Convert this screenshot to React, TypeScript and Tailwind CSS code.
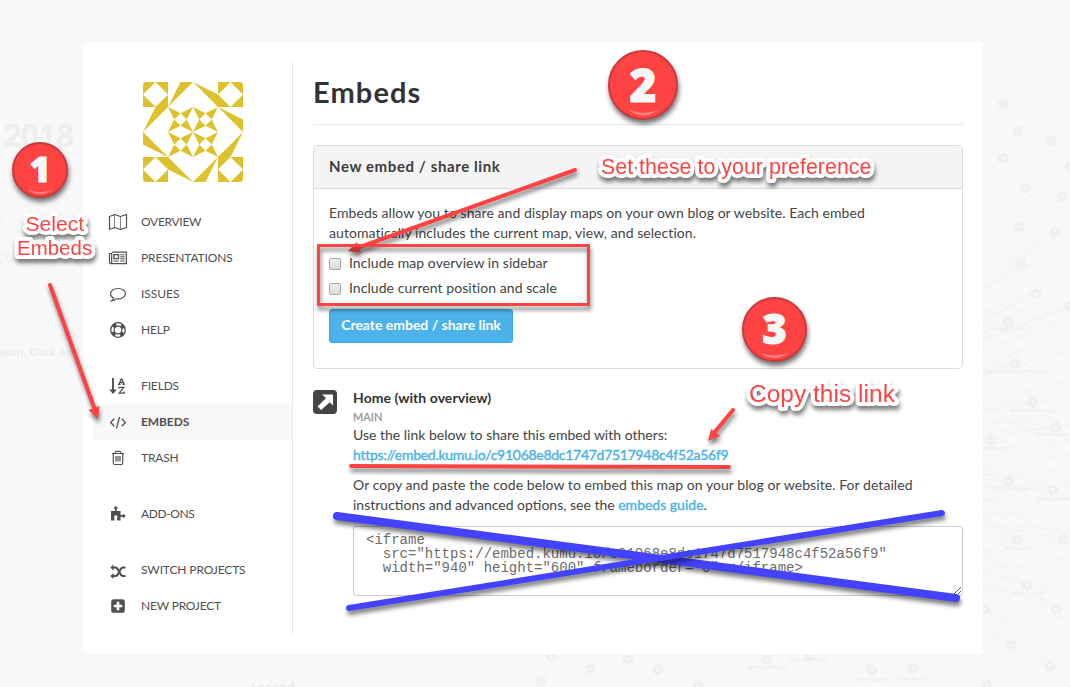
import type { ReactNode } from "react";

const navGroups = [
  [
    { label: "OVERVIEW", icon: "map", tracking: "tracking-[-0.3px]" },
    { label: "PRESENTATIONS", icon: "news", tracking: "tracking-[-0.15px]" },
    { label: "ISSUES", icon: "comment", tracking: "tracking-[-0.05px]" },
    { label: "HELP", icon: "help", tracking: "tracking-[-0.2px]" },
  ],
  [
    { label: "FIELDS", icon: "sort", tracking: "tracking-[-0.15px]" },
    { label: "EMBEDS", icon: "code", tracking: "tracking-[-0.1px]", active: true },
    { label: "TRASH", icon: "trash", tracking: "tracking-[-0.2px]" },
  ],
  [{ label: "ADD-ONS", icon: "puzzle", tracking: "tracking-[-0.4px]" }],
  [
    { label: "SWITCH PROJECTS", icon: "switch", tracking: "tracking-[-0.13px]" },
    { label: "NEW PROJECT", icon: "plus", tracking: "tracking-[-0.2px]" },
  ],
];

const icons: Record<string, ReactNode> = {
  map: (
    <g fill="none" stroke="currentColor" strokeLinejoin="round">
      <path d="M1.5 4.5 6.5 2.5 12.5 4.5 18.5 2.5V15.5L12.5 17.5 6.5 15.5 1.5 17.5Z" strokeWidth="1.2" />
      <path d="M6.5 2.5V15.5M12.5 4.5V17.5" strokeWidth="0.7" />
    </g>
  ),
  news: (
    <g fill="none" stroke="currentColor">
      <path d="M4 4.2H18.3V15.6H2.6Q1.5 15.6 1.5 14.2V5.5H3.7V14.2Q3.7 15.6 2.6 15.6" strokeWidth="1.2" />
      <path d="M6 6.6H10.5V10.6H6Z" strokeWidth="1.4" />
      <path d="M12.2 6.8H16.7M12.2 8.8H16.7M12.2 10.8H16.7M5.4 13H10.8M12.2 13H16.7" />
    </g>
  ),
  comment: (
    <path
      d="M10 4.5C5.6 4.5 2.5 6.8 2.5 9.7C2.5 11.6 3.8 13.1 5.7 14.1C5.4 15.3 4.6 16.2 3.5 17C5.6 16.8 7.2 16 8.4 14.9C13.6 15.4 17.5 13 17.5 9.7C17.5 6.8 14.4 4.5 10 4.5Z"
      fill="none"
      stroke="currentColor"
      strokeWidth="1.2"
    />
  ),
  help: (
    <g fill="none" stroke="currentColor">
      <circle cx="10" cy="10" r="5.7" strokeWidth="4" strokeDasharray="4 4.954" strokeDashoffset="-2.48" />
      <circle cx="10" cy="10" r="7.3" strokeWidth="1.3" />
      <circle cx="10" cy="10" r="3.9" strokeWidth="1.2" />
    </g>
  ),
  sort: (
    <>
      <path d="M5 2V15M3.2 14.5 5 16.6 6.8 14.5Z" fill="currentColor" stroke="currentColor" strokeWidth="1.9" />
      <g fill="none" stroke="currentColor" strokeWidth="1.3">
        <path d="M11 8.2 13.3 2.8H13.8L16 8.2M11.7 6.5H15.4M10 8.4H12.6M14.5 8.4H17" />
        <path d="M11 12.6V11.4H15.8L11.2 17.2H16.1V15.6" />
      </g>
    </>
  ),
  code: (
    <path d="M6.2 6.8 2.7 10.5 6.2 14.2M13.8 6.8 17.3 10.5 13.8 14.2M11.6 4.8 8.4 16.3" fill="none" stroke="currentColor" strokeWidth="1.3" />
  ),
  trash: (
    <g fill="none" stroke="currentColor" strokeWidth="1.2">
      <path d="M4 5.5H16M7 5.2Q7.2 3.4 8.4 3.4H11.6Q12.8 3.4 13 5.2M5.3 5.5V15Q5.3 16.5 6.7 16.5H13.3Q14.7 16.5 14.7 15V5.5" />
      <path d="M8 8V13.5M10 8V13.5M12 8V13.5" />
    </g>
  ),
  puzzle: (
    <path
      d="M3 7H6.9V5.2A1.6 1.6 0 1 1 8.7 5.2V7H12.6V11H14.4A1.6 1.6 0 1 1 14.4 12.8H12.6V16.5H9.2V13.7A1.6 1.6 0 1 0 6.4 13.7V16.5H3Z"
      fill="currentColor"
    />
  ),
  switch: (
    <g fill="none" stroke="currentColor" strokeWidth="2">
      <path d="M17.5 7.5H15C11 7.5 11.5 16 7.5 16H4.5" />
      <path d="M17.5 16H15C11 16 11.5 7.5 7.5 7.5H4.5" />
      <path d="M5.5 4.5 2.3 7.5 5.5 10.5ZM5.5 13 2.3 16 5.5 19Z" fill="currentColor" stroke="none" />
    </g>
  ),
  plus: (
    <>
      <rect x="3.2" y="3.2" width="13.6" height="13.6" rx="2.6" fill="currentColor" />
      <path d="M10 5.8V14.2M5.8 10H14.2" stroke="#fff" strokeWidth="2.6" />
    </>
  ),
};

function Identicon() {
  const corners = ["0 0", "75 0", "0 75", "75 75"];
  const centers = ["25 25", "50 25", "25 50", "50 50"];
  return (
    <svg className="ml-[50px] h-[100px] w-[100px] rounded-[3px]" viewBox="0 0 100 100" fill="#ddc22e">
      {corners.map((c) => (
        <path key={c} d="M0 0H25V25H0ZM12.5 0 0 12.5 12.5 25 25 12.5Z" fillRule="evenodd" transform={`translate(${c})`} />
      ))}
      {centers.map((c) => (
        <path
          key={c}
          d="M0 0 12.5 6.25 6.25 12.5ZM25 0 12.5 6.25 18.75 12.5ZM25 25 18.75 12.5 12.5 18.75ZM0 25 6.25 12.5 12.5 18.75Z"
          transform={`translate(${c})`}
        />
      ))}
      <path d="M25 25 37.5 0H50ZM50 0 75 12.5V25ZM75 25 100 37.5V50ZM100 50 87.5 75H75ZM75 75 62.5 100H50ZM50 100 25 87.5V75ZM25 75 0 62.5V50ZM0 50 12.5 25H25Z" />
    </svg>
  );
}

const nodes = [
  [1003, 104], [1018, 131], [1051, 141], [541, 681], [1003, 158], [1070, 167], [1025, 188], [1063, 197], [1019, 227],
  [1055, 232], [1021, 264], [1036, 294], [1070, 306], [1008, 322], [1015, 363], [1033, 402], [1056, 427], [992, 440],
  [1009, 481], [1053, 490], [1017, 540], [1064, 539], [1027, 585], [985, 609], [1056, 609], [1011, 645], [1050, 666],
  [987, 685], [551, 656], [590, 669], [628, 659], [658, 670], [698, 686], [767, 659], [809, 655], [872, 670], [913, 669],
];

const names = [
  { x: 1008, y: 331, name: "Timothy Jenkins" },
  { x: 1015, y: 373, name: "Christine Mitchel Robinson" },
  { x: 1033, y: 412, name: "Rebecca Gustafson" },
  { x: 1059, y: 436, name: "Kate Margaret Robin" },
  { x: 991, y: 450, name: "Liv Anderson" },
  { x: 1010, y: 491, name: "Derek Peterson" },
  { x: 1053, y: 500, name: "Robin Larsson" },
  { x: 1017, y: 550, name: "Ida Pierson" },
  { x: 1028, y: 595, name: "Milan Tedorak" },
  { x: 767, y: 669, name: "Veronica Petrson" },
  { x: 809, y: 661, name: "Nicole Blanchon" },
  { x: 872, y: 681, name: "Laura Robinson" },
  { x: 913, y: 680, name: "Rosa Medellin" },
];

function MapBackdrop() {
  return (
    <svg className="absolute inset-0 h-full w-full" viewBox="0 0 1070 687" fontFamily="Open Sans, sans-serif">
      <g stroke="#f5f2ee" strokeWidth="0.9">
        {nodes.map(([x, y], i) => (
          <path key={i} d={`M${x} ${y}L780 ${340 + i * 7}`} />
        ))}
        {nodes.slice(9).map(([x, y], i) => (
          <path key={i} d={`M${x} ${y}L${840 - i * 4} 400M1070 ${230 + i * 15}L900 ${320 + i * 10}M1070 ${330 + i * 14}L940 ${280 + i * 11}`} />
        ))}
      </g>
      {nodes.map(([x, y], i) => (
        <g key={i}>
          <ellipse cx={x} cy={y} rx="5.5" ry="5.5" fill="#f1f1f5" />
          {i > 3 && <circle cx={x} cy={y} r="2.6" fill="#f7f7f2" stroke="#e9e9ea" strokeWidth="0.8" />}
        </g>
      ))}
      <g fill="#ebebea" fontSize="5" textAnchor="middle">
        {names.map((n) => (
          <text key={n.name} x={n.x} y={n.y}>{n.name}</text>
        ))}
      </g>
      <text x="3" y="147" fontSize="32" fontWeight="700" fill="#eeeeee" textLength="71">2018</text>
      <text x="-4" y="226" fontSize="13" fill="#eeeeee">y</text>
      <text x="-2" y="262" fontSize="12" fill="#eeeeee">COMMUNITY</text>
      <text x="-3" y="356" fontSize="11" fontWeight="700" fill="#ececec">eson. Click and</text>
      <text x="251" y="692" fontSize="12" fontWeight="700" fill="#e9e9e9">Legend</text>
    </svg>
  );
}

const badges = [
  { n: "1", className: "left-[12px] top-[142px] h-[56px] w-[56px] pb-[3px] text-[36px]" },
  { n: "2", className: "left-[608px] top-[50px] h-[70px] w-[70px] pb-[3px] text-[46px]" },
  { n: "3", className: "left-[742px] top-[297px] h-[65px] w-[65px] pb-[3px] text-[42px]" },
];

function Annotations() {
  return (
    <>
      <svg className="pointer-events-none absolute inset-0 h-full w-full" viewBox="0 0 1070 687">
        <defs>
          <filter id="shadow" filterUnits="userSpaceOnUse" x="0" y="0" width="1070" height="687" colorInterpolationFilters="sRGB">
            <feDropShadow dx="1" dy="4" stdDeviation="2" floodColor="#000" floodOpacity="0.5" />
          </filter>
        </defs>
        <g filter="url(#shadow)" stroke="#ff4343" fill="#ff4343" strokeLinecap="round">
          <path d="M50 285 95 410" strokeWidth="4" />
          <path d="M98 419 88.5 410 99.5 406Z" stroke="none" />
        </g>
        <g filter="url(#shadow)" stroke="#ff4343" fill="#ff4343" strokeLinecap="round">
          <path d="M575 170 360 247" strokeWidth="4" />
          <path d="M348 251 357 242 361 253Z" stroke="none" />
        </g>
        <g filter="url(#shadow)" stroke="#ff4343" fill="#ff4343" strokeLinecap="round">
          <path d="M733 410 714 433" strokeWidth="4" />
          <path d="M708 441 711 429 720 436Z" stroke="none" />
        </g>
        <path filter="url(#shadow)" d="M351 466 729 467" stroke="#ff4343" strokeWidth="4" strokeLinecap="round" />
        <rect filter="url(#shadow)" x="318.5" y="245.5" width="270" height="59" fill="none" stroke="#ff4343" strokeWidth="3" />
        <path filter="url(#shadow)" d="M337 516 956 598" stroke="#4343ff" strokeWidth="8" strokeLinecap="round" />
        <path filter="url(#shadow)" d="M349 608 942 513" stroke="#4343ff" strokeWidth="6" strokeLinecap="round" />
        <g
          filter="url(#shadow)"
          fill="#ff4343"
          stroke="#fff"
          strokeWidth="8"
          strokeLinejoin="round"
          paintOrder="stroke"
          fontFamily="Liberation Sans, Arial, sans-serif"
        >
          <text x="25.5" y="231" fontSize="21">Select</text>
          <text x="17" y="255" fontSize="20.4">Embeds</text>
          <text x="601" y="174" fontSize="21.3">Set these to your preference</text>
          <text x="749" y="402" fontSize="24.4">Copy this link</text>
        </g>
      </svg>
      {badges.map((b) => (
        <div
          key={b.n}
          className={`absolute flex items-center justify-center rounded-full border-2 border-[#c93a40] bg-[#ff4343] font-['Noto_Sans'] leading-none font-black text-[#f8f8f8] shadow-[1px_4px_5px_rgba(0,0,0,0.55)] [-webkit-text-stroke:1px_#f8f8f8] ${b.className}`}
        >
          {b.n}
          <svg className="absolute bottom-[3%] left-1/4 w-1/2" viewBox="0 0 40 8">
            <path d="M1 1Q20 8 39 1Q20 15 1 1Z" fill="#ff8080" />
          </svg>
        </div>
      ))}
    </>
  );
}

function Sidebar() {
  return (
    <aside className="mt-5 ml-[10px] flex h-[572px] w-[200px] flex-col border-r border-[#e8e8e8] pt-5">
      <Identicon />
      <nav className="mt-[22px] flex flex-col gap-5">
        {navGroups.map((group, i) => (
          <ul key={i}>
            {group.map((item) => (
              <li
                key={item.label}
                className={`flex h-9 items-center pl-[15px] text-[12px] text-[#505050] ${item.tracking} ${
                  "active" in item ? "bg-[#f8f8f8] font-bold" : ""
                }`}
              >
                <svg className="mr-[13px] h-5 w-5" viewBox="0 0 20 20">
                  {icons[item.icon]}
                </svg>
                {item.label}
              </li>
            ))}
          </ul>
        ))}
      </nav>
    </aside>
  );
}

function Option({ children }: { children: ReactNode }) {
  return (
    <label className="flex h-[25px] items-center">
      <input
        type="checkbox"
        className="mt-px mr-2 h-3 w-3 appearance-none rounded-[2px] border border-[#a8a8a8] bg-linear-to-b from-[#eeeeee] to-[#dcdcdc]"
      />
      <span className="pb-px">{children}</span>
    </label>
  );
}

export default function App() {
  return (
    <div className="relative h-[687px] w-[1070px] overflow-hidden bg-[#f8f8f8] pt-[42px] pl-[83px] font-['Lato',sans-serif] text-[14px] leading-5 tracking-[0.06px] text-[#444]">
      <MapBackdrop />
      <div className="relative flex h-[612px] w-[900px] rounded-[3px] bg-white">
        <Sidebar />
        <main className="ml-5 w-[650px]">
          <h1 className="mt-5 flex h-[63px] items-center border-b border-[#e8e8e8] pb-[3px] text-[29px] font-bold tracking-[1.1px] text-[#333]">
            Embeds
          </h1>

          <section className="mt-5 h-[224px] rounded-[4px] border border-[#dcdcdc]">
            <h2 className="flex h-[43px] items-center border-b border-[#dcdcdc] bg-[#f4f4f4] px-[15px] pb-[2px] text-[15px] font-bold tracking-[0.6px] text-[#3c3c3c]">
              New embed / share link
            </h2>
            <div className="px-[15px] pt-[14px]">
              <p>
                Embeds allow you to share and display maps on your own blog or website. Each embed
                <br />
                automatically includes the current map, view, and selection.
              </p>
              <div className="mt-2">
                <Option>Include map overview in sidebar</Option>
                <Option>Include current position and scale</Option>
              </div>
              <button className="mt-2 h-[34px] w-[184px] rounded-[3px] border border-[#3ea8e2] bg-[#4bb3ea] pb-[2px] font-bold tracking-[-0.02px] text-white">
                Create embed / share link
              </button>
            </div>
          </section>

          <section className="mt-[19px] flex">
            <svg className="mt-[2px] mr-4 h-6 w-6 shrink-0" viewBox="0 0 24 24">
              <rect width="24" height="24" rx="4" fill="#444" />
              <path d="M9 4.5H20V15.5L16.8 12.2 8 20 4.6 16.6 13 8.1Z" fill="#fff" />
            </svg>
            <div>
              <h3 className="font-bold text-[#333]">Home (with overview)</h3>
              <div className="h-[17px] text-[11px] leading-[17px] text-[#999] [-webkit-text-stroke:0.3px]">MAIN</div>
              <p className="tracking-normal">Use the link below to share this embed with others:</p>
              <a className="block tracking-[-0.28px] text-[#4bb3ea] [-webkit-text-stroke:0.4px]">
                https://embed.kumu.io/c91068e8dc1747d7517948c4f52a56f9
              </a>
              <p className="mt-[10px] whitespace-nowrap">
                Or copy and paste the code below to embed this map on your blog or website. For detailed
                <br />
                <span className="tracking-normal">
                  instructions and advanced options, see the{" "}
                  <a className="text-[#4bb3ea] [-webkit-text-stroke:0.4px]">embeds guide</a>.
                </span>
              </p>
              <textarea
                readOnly
                className="mt-[11px] block h-[70px] w-[610px] rounded-[3px] border border-[#ccc] px-3 py-[6px] font-['Liberation_Mono',monospace] text-[14px] leading-[14px] tracking-normal text-[#6c6c6c]"
                value={`<iframe\n  src="https://embed.kumu.io/c91068e8dc1747d7517948c4f52a56f9"\n  width="940" height="600" frameborder="0"></iframe>`}
              />
            </div>
          </section>
        </main>
      </div>
      <Annotations />
    </div>
  );
}
